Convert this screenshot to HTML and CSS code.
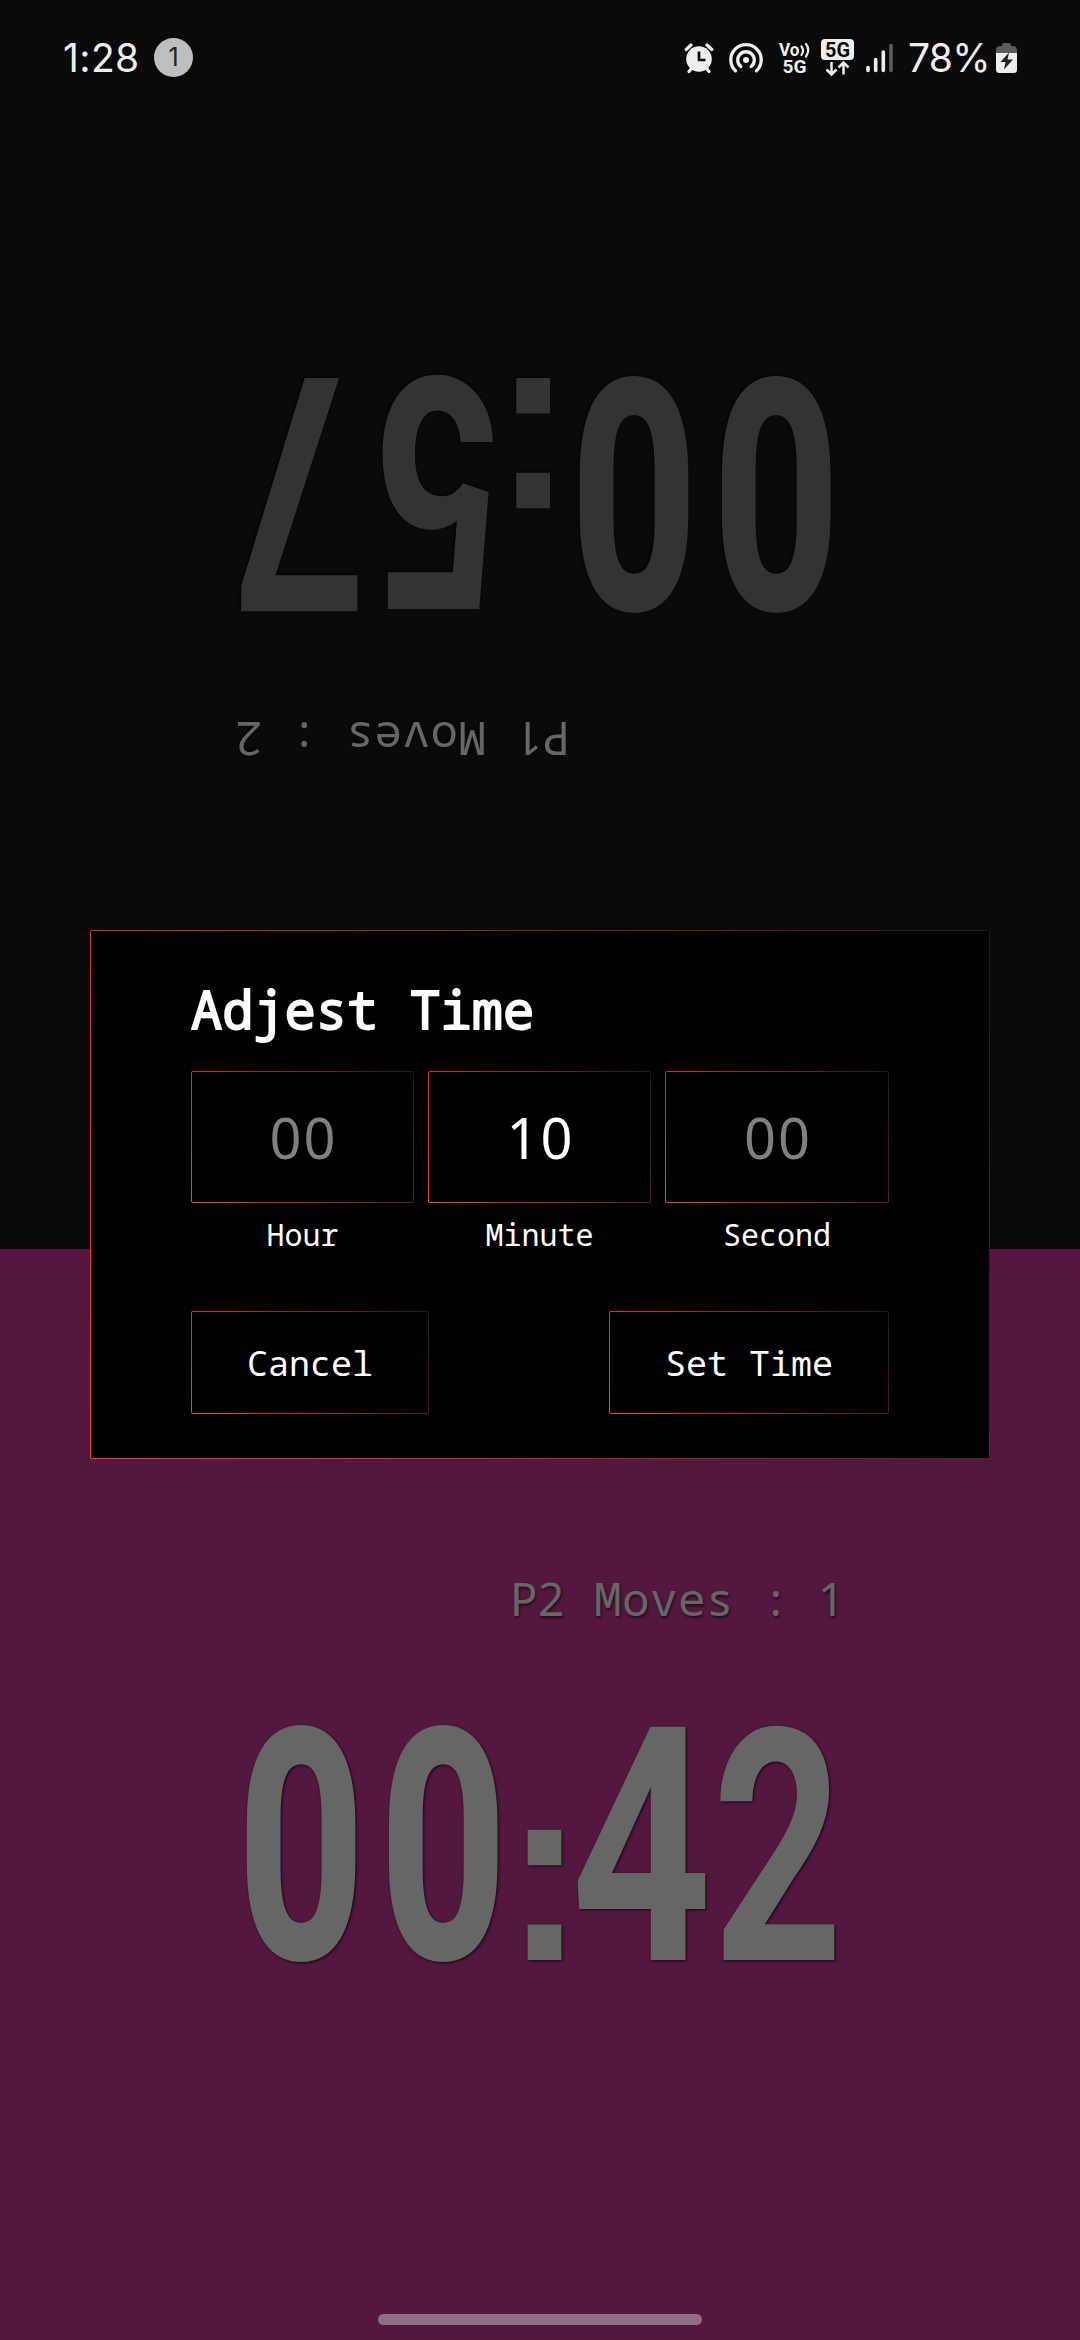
FILE: index.html
```html
<!DOCTYPE html>
<html lang="en">
<head>
<meta charset="utf-8">
<title>Chess Clock</title>
<link rel="stylesheet" href="styles.css">
</head>
<body>
<div class="screen">
  <section class="player player-one">
    <header class="status">
      <span class="time">1:28</span>
      <span class="count">1</span>
      <div class="tray">
        <svg class="alarm" width="30" height="32" viewBox="0 0 30 32">
          <circle cx="15" cy="17" r="12.8" fill="#eee"/>
          <path d="M2.200 7.500 7 3M27.800 7.500 23 3M5 29.500 7.500 26.500M25 29.500 22.500 26.500" stroke="#eee" stroke-width="3.200" stroke-linecap="round"/>
          <path d="M15 9.500V18h6.500" fill="none" stroke="#0b0b0b" stroke-width="2.700"/>
        </svg>
        <svg class="hotspot" width="36" height="32" viewBox="0 0 36 32">
          <circle cx="18" cy="18" r="3" fill="#eee"/>
          <path d="M12.800 24.500a8.300 8.300 0 1 1 10.400 0M7.500 28.800a15.200 15.200 0 1 1 21 0" fill="none" stroke="#eee" stroke-width="3.300" stroke-linecap="round"/>
        </svg>
        <svg class="volte" width="34" height="36" viewBox="0 0 34 36">
          <text class="tiny" x="1" y="16" font-size="18" textLength="20.500" lengthAdjust="spacingAndGlyphs">Vo</text>
          <path d="M23.500 6.500q3 4 0 8.500M28 4q4.500 6 0 12.500" fill="none" stroke="#eee" stroke-width="2.200" stroke-linecap="round"/>
          <text class="tiny" x="4.500" y="32.500" font-size="19" textLength="24" lengthAdjust="spacingAndGlyphs">5G</text>
        </svg>
        <svg class="net" width="34" height="38" viewBox="0 0 34 38">
          <rect x="0" y="0" width="33" height="21" rx="4" fill="#eee"/>
          <text class="tiny dark" x="4" y="18" font-size="20.500" textLength="25" lengthAdjust="spacingAndGlyphs">5G</text>
          <path d="M10.500 23V35M5.500 30.500l5 5 5-5M22.500 35.500V23.500M17.500 28.500l5-5 5 5" fill="none" stroke="#eee" stroke-width="2.500"/>
        </svg>
        <svg class="bars" width="28" height="30" viewBox="0 0 28 30">
          <g stroke-width="3.600" stroke-linecap="round" stroke="#eee"><path d="M2 24.500V27.500M9.700 16.500V27.500M17.300 9V27.500"/><path stroke="#5c5c5c" d="M25 2.500V27.500"/></g>
        </svg>
        <span class="percent">78%</span>
        <svg class="battery" width="22" height="32" viewBox="0 0 22 32">
          <path d="M6 4V3q0-2 2-2h5q2 0 2 2v1h1.500q4.500 0 4.500 4.500V13H0V8.500Q0 4 4.500 4z" fill="#5c5c5c"/>
          <path d="M0 11h21v16.500q0 3.500-3.500 3.500h-14Q0 31 0 27.500z" fill="#eee"/>
          <path d="M13 10.500 4.500 20h5L8 27.500 17 17.500h-5.500z" fill="#222"/>
        </svg>
      </div>
    </header>
    <div class="face flipped">
      <p class="moves">P<span class="num">1</span> Moves : <span class="num">2</span></p>
      <svg class="clock" width="600" height="240" viewBox="0 0 600 240">
        <text class="zeros" transform="scale(.69 1)" y="234" x="1 207">00</text>
        <text class="colon" transform="scale(.93 1)" x="287" y="237">:</text>
        <text class="round" transform="scale(.705 1)" y="237" x="476">5</text>
        <text transform="scale(.705 1)" y="237" x="675">7</text>
      </svg>
    </div>
  </section>
  <section class="player player-two">
    <div class="face">
      <p class="moves">P<span class="num">2</span> Moves : <span class="num">1</span></p>
      <svg class="clock" width="600" height="240" viewBox="0 0 600 240">
        <text class="zeros" transform="scale(.69 1)" y="234" x="-3 203">00</text>
        <text class="colon" transform="scale(.93 1)" x="284.500" y="237">:</text>
        <text transform="scale(.75 1)" y="237" x="441">4</text>
        <text class="round" transform="scale(.7 1)" y="237" x="675">2</text>
      </svg>
    </div>
    <div class="handle"></div>
  </section>

  <form class="dialog">
    <h1>Adjest Time</h1>
    <div class="fields">
      <label><span class="box num empty">00</span><span class="name">Hour</span></label>
      <label><span class="box num">10</span><span class="name">Minute</span></label>
      <label><span class="box num empty">00</span><span class="name">Second</span></label>
    </div>
    <div class="actions">
      <button type="button">Cancel</button>
      <button type="button">Set Time</button>
    </div>
  </form>
</div>
</body>
</html>
```
FILE: styles.css
```css
* { box-sizing: border-box; }
body { margin: 0; background: #0a0a0a; }
.screen {
  position: relative;
  display: flex;
  flex-direction: column;
  width: 1080px;
  height: 2340px;
  overflow: hidden;
  font-family: "Noto Sans Mono", "DejaVu Sans Mono", monospace;
}
.player { display: flex; flex-direction: column; }
.player-one { height: 1249px; background: #0a0a0a; --digit: #333; }
.player-two { height: 1091px; background: #54183f; --digit: #666; }

.status {
  display: flex;
  align-items: center;
  height: 115px;
  padding: 0 62px 0 63px;
  color: #eee;
  font-family: Inter, Roboto, sans-serif;
  font-size: 39px;
}
.time { width: 91px; letter-spacing: .4px; }
.count {
  width: 39px;
  height: 39px;
  border-radius: 50%;
  background: #bebebe;
  color: #222;
  font-size: 25px;
  line-height: 39px;
  text-align: center;
}
.tray { display: flex; align-items: center; margin-left: auto; }
.tray svg { flex: none; display: block; }
.hotspot { margin-left: 14px; }
.volte { margin-left: 14px; }
.net { margin-left: 9px; }
.bars { margin-left: 11px; }
.percent { width: 81px; margin: 0 7px 0 14px; letter-spacing: -.7px; white-space: nowrap; }
.tiny { font-family: Roboto, sans-serif; font-weight: 700; fill: #eee; }
.tiny.dark { fill: #0b0b0b; }

/* Digits with a plain zero and one, spaced to the monospace pitch */
.num { font-family: "Noto Sans", "Open Sans", sans-serif; letter-spacing: .036em; }

.face { display: flex; flex-direction: column; width: 600px; margin: 0 auto; }
.flipped { transform: rotate(180deg); margin-top: 260px; }
.player-two .face { margin-top: 319px; }
.moves {
  margin: 0 0 95px;
  padding-left: 270px;
  height: 60px;
  color: #666;
  font-size: 46px;
  line-height: 60px;
  letter-spacing: .4px;
  white-space: pre;
  text-shadow: 1px 2px 3px rgba(0, 0, 0, .6);
}
.clock {
  display: block;
  overflow: visible;
  fill: var(--digit);
  font-family: Roboto, sans-serif;
  font-weight: 700;
  font-size: 328px;
  filter: drop-shadow(1px 1px 1.5px rgba(0, 0, 0, .75));
}
.zeros { font-size: 319px; stroke: var(--digit); stroke-width: 4px; }
.round { font-size: 325px; }
.colon { font-family: "Liberation Sans", sans-serif; font-size: 258px; }
.handle { width: 324px; height: 11px; margin: auto auto 15px; border-radius: 6px; background: #936c86; }

.dialog, .box, button {
  border: 1px solid transparent;
  border-radius: 2px;
  background: linear-gradient(#000, #000) padding-box, linear-gradient(63deg, #ff3b30, #1c1c1c) border-box;
}
.dialog {
  position: absolute;
  left: 90px;
  top: 930px;
  width: 900px;
  height: 529px;
  padding: 48px 100px 0;
  color: #fff;
}
h1 {
  margin: 0;
  height: 92px;
  font-size: 52px;
  line-height: 60px;
  font-weight: 400;
  -webkit-text-stroke: 1.8px #fff;
}
.fields { display: grid; grid-template-columns: 223px 223px 224px; gap: 14px; }
label { display: flex; flex-direction: column; align-items: center; }
.box { width: 100%; height: 132px; padding-left: 2px; font-size: 56px; line-height: 130px; text-align: center; }
.empty { color: #808080; }
.name { margin-top: 14px; font-size: 30px; line-height: 36px; }
.actions { display: flex; justify-content: space-between; margin-top: 58px; }
button { height: 103px; padding: 0 55px; color: #fff; font: 35px/100px "Noto Sans Mono", "DejaVu Sans Mono", monospace; }
```
